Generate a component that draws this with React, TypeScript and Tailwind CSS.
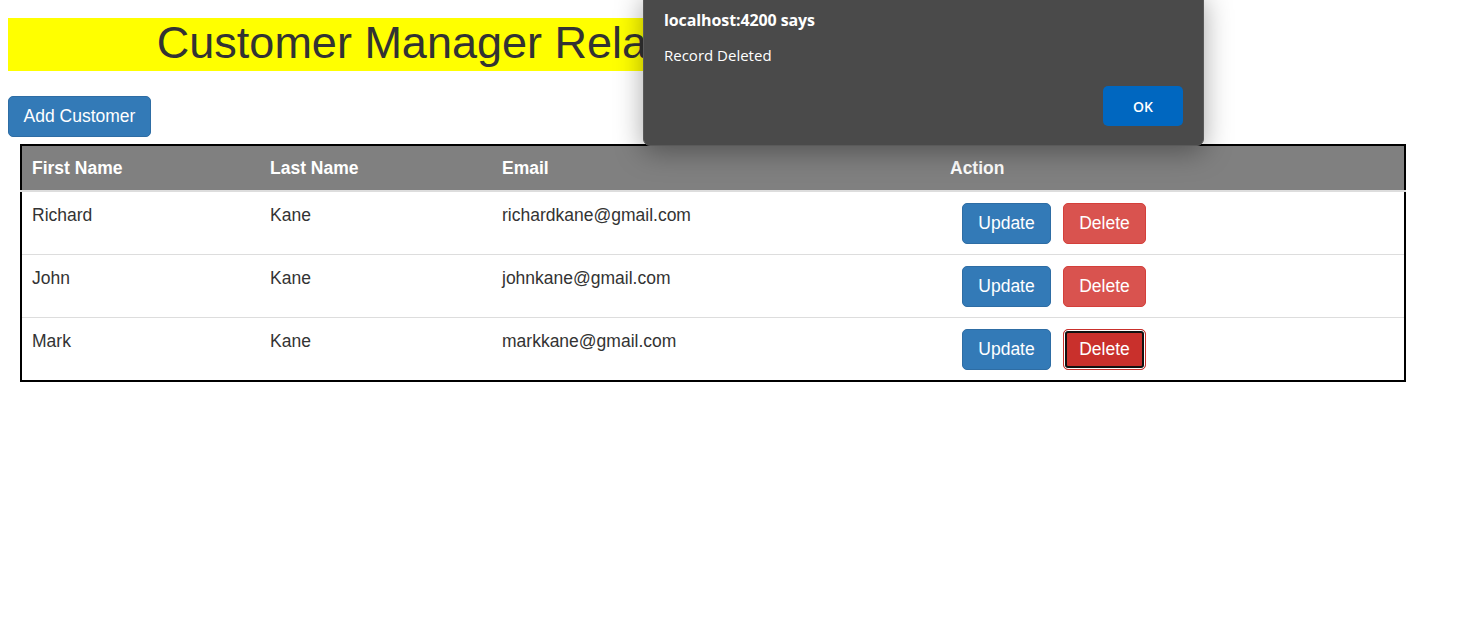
import React from 'react';

const customers = [
  { first: 'Richard', last: 'Kane', email: 'richardkane@gmail.com' },
  { first: 'John', last: 'Kane', email: 'johnkane@gmail.com' },
  { first: 'Mark', last: 'Kane', email: 'markkane@gmail.com' },
];

const btn =
  'h-[41px] rounded-[5px] border px-[15px] text-[17.5px] leading-[25px] text-white';

export default function App() {
  return (
    <div className="relative min-h-[643px] bg-white p-2 font-['Liberation_Sans',Arial,sans-serif] text-[17.5px] text-[#333]">
      <h1 className="mt-[10px] h-[53px] w-[943px] bg-[#ffff00] pb-1 text-center text-[45px] leading-[49px] text-[#333]">
        Customer Manager Relationship
      </h1>

      <button className="mt-[25px] h-[41px] w-[143px] rounded-[5px] border border-[#2e6da4] bg-[#337ab7] text-[17.5px] leading-[25px] text-white">
        Add Customer
      </button>

      <table className="ml-3 mt-[7px] w-[1386px] table-fixed border-collapse border-2 border-black">
        <thead>
          <tr className="bg-[#808080] text-left text-white">
            <th className="w-[239px] border-b-[2.5px] border-[#ddd] px-[10px] py-[9px] font-bold">First Name</th>
            <th className="w-[232px] border-b-[2.5px] border-[#ddd] px-[10px] py-[9px] font-bold">Last Name</th>
            <th className="w-[448px] border-b-[2.5px] border-[#ddd] px-[10px] py-[9px] font-bold">Email</th>
            <th className="border-b-[2.5px] border-[#ddd] px-[10px] py-[9px] font-bold">Action</th>
          </tr>
        </thead>
        <tbody>
          {customers.map((c, i) => (
            <tr key={c.first} className={i > 0 ? 'border-t border-[#ddd]' : ''}>
              <td className="p-[10px] align-top">{c.first}</td>
              <td className="p-[10px] align-top">{c.last}</td>
              <td className="p-[10px] align-top">{c.email}</td>
              <td className="px-[10px] py-[10px] align-top">
                <div className="mt-px flex gap-3 pl-3">
                  <button className={`${btn} w-[89px] border-[#2e6da4] bg-[#337ab7]`}>Update</button>
                  {i === 2 ? (
                    <button
                      className={`${btn} w-[83px] border-[#c9302c] bg-[#c9302c] shadow-[inset_0_0_0_1px_#fff,inset_0_0_0_3px_#111]`}
                    >
                      Delete
                    </button>
                  ) : (
                    <button className={`${btn} w-[83px] border-[#d43f3a] bg-[#d9534f]`}>Delete</button>
                  )}
                </div>
              </td>
            </tr>
          ))}
        </tbody>
      </table>

      {/* browser alert */}
      <div className="absolute left-[643px] top-[-8px] w-[561px] rounded-[7px] border border-[#5a5a5a] bg-[#4a4a4a] px-5 pb-[19px] pt-[16px] font-['Open_Sans','Noto_Sans',sans-serif] text-white shadow-[0_6px_28px_rgba(0,0,0,0.35)]">
        <div className="text-[16px] font-bold leading-[22px] tracking-[-0.1px]">localhost:4200 says</div>
        <div className="mt-[14px] text-[15px] leading-[20px]">Record Deleted</div>
        <div className="mt-[21px] flex justify-end">
          <button className="h-[40px] w-[80px] rounded-[5px] bg-[#0067c0] text-[14px] font-semibold text-white">
            OK
          </button>
        </div>
      </div>
    </div>
  );
}
